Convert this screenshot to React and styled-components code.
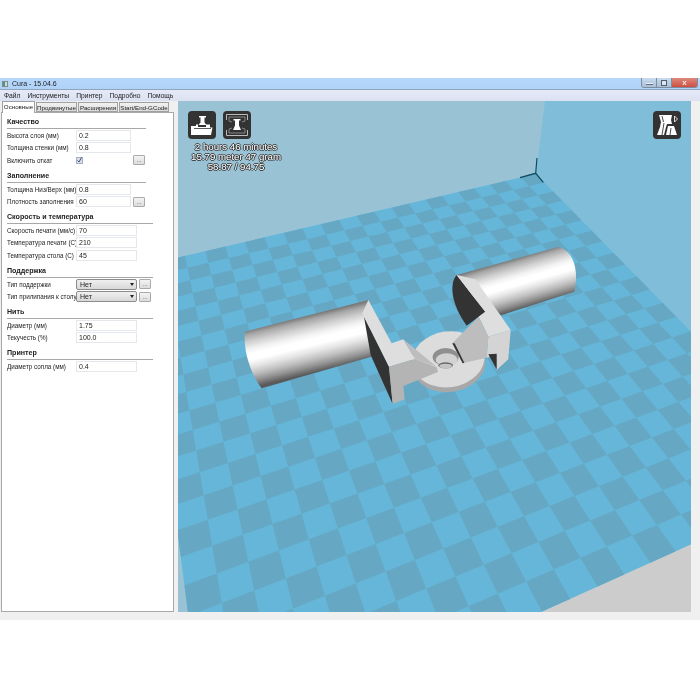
import React from "react";
import styled, { createGlobalStyle } from "styled-components";

const GlobalStyle = createGlobalStyle`
  html, body {
    margin: 0;
    padding: 0;
    background: #fff;
  }
  * {
    box-sizing: border-box;
  }
`;

// floor perspective: back corner, two vanishing points, step of one cell each way
const CORNER = [536, 174];
const VANISH_U = [2566, -300];
const VANISH_V = [70, -300];
const STEP_U = -0.00737;
const STEP_V = -0.0178;
const GRID = 22;

const project = (i, j) => {
  const a = STEP_U * i;
  const b = STEP_V * j;
  const w = 1 + a + b;
  return [
    (CORNER[0] + a * VANISH_U[0] + b * VANISH_V[0]) / w,
    (CORNER[1] + a * VANISH_U[1] + b * VANISH_V[1]) / w,
  ];
};

const toPoints = (pts) => pts.map((p) => p[0].toFixed(1) + "," + p[1].toFixed(1)).join(" ");

const plateLeft = project(GRID, 0);
const plateFront = project(GRID, GRID);
const plateRight = project(0, GRID);
const plate = toPoints([CORNER, plateLeft, plateFront, plateRight]);

const buildCheckers = () => {
  const cells = [];
  for (let i = 0; i < GRID; i++) {
    for (let j = 0; j < GRID; j++) {
      if ((i + j) % 2 !== 0) continue;
      cells.push(toPoints([project(i, j), project(i + 1, j), project(i + 1, j + 1), project(i, j + 1)]));
    }
  }
  return cells;
};

const checkers = buildCheckers();

const rodStops = [
  ["#7a7a7a", 0],
  ["#a8a8a8", 0.08],
  ["#cfcfcf", 0.2],
  ["#f2f2f2", 0.33],
  ["#ffffff", 0.42],
  ["#ffffff", 0.52],
  ["#e4e4e4", 0.64],
  ["#bdbdbd", 0.77],
  ["#929292", 0.88],
  ["#5a5a5a", 1],
];

const RodGradient = ({ id, x1, y1, x2, y2 }) => (
  <linearGradient id={id} gradientUnits="userSpaceOnUse" x1={x1} y1={y1} x2={x2} y2={y2}>
    {rodStops.map(([color, offset]) => (
      <stop key={offset} offset={offset} stopColor={color} />
    ))}
  </linearGradient>
);

const sections = [
  {
    title: "Качество",
    width: 55,
    lineWidth: 139,
    rows: [
      { label: "Высота слоя (мм)", value: "0.2" },
      { label: "Толщина стенки (мм)", value: "0.8" },
      { label: "Включить откат", check: true, more: true },
    ],
  },
  {
    title: "Заполнение",
    width: 55,
    lineWidth: 139,
    rows: [
      { label: "Толщина Низ/Верх (мм)", value: "0.8" },
      { label: "Плотность заполнения", value: "60", more: true },
    ],
  },
  {
    title: "Скорость и температура",
    width: 61,
    lineWidth: 146,
    rows: [
      { label: "Скорость печати (мм/с)", value: "70" },
      { label: "Температура печати (С)", value: "210" },
      { label: "Температура стола (С)", value: "45" },
    ],
  },
  {
    title: "Поддержка",
    width: 61,
    lineWidth: 146,
    rows: [
      { label: "Тип поддержки", select: "Нет", more: true },
      { label: "Тип прилипания к столу", select: "Нет", more: true },
    ],
  },
  {
    title: "Нить",
    width: 61,
    lineWidth: 146,
    rows: [
      { label: "Диаметр (мм)", value: "1.75" },
      { label: "Текучесть (%)", value: "100.0" },
    ],
  },
  {
    title: "Принтер",
    width: 61,
    lineWidth: 146,
    rows: [{ label: "Диаметр сопла (мм)", value: "0.4" }],
  },
];

const PrintIcon = () => (
  <svg width="28" height="28" viewBox="0 0 28 28">
    <rect width="28" height="28" rx="4" fill="#333" />
    <path d="M11 5h7v1.500h-1.500v5l2 2.500h-8l2-2.500v-5H11z" fill="#fff" />
    <path d="M3 15h5v-1.500h2V16h8v-2.500h4v3h2.500L23 24H3z" fill="#fff" />
    <path d="M6 17.500h17" stroke="#333" strokeWidth="0.8" />
  </svg>
);

const LayerIcon = () => (
  <svg width="28" height="28" viewBox="0 0 28 28">
    <rect width="28" height="28" rx="4" fill="#333" />
    <path d="M3.500 9V3.500h21V9M3.500 19v5.500h21V19" fill="none" stroke="#bbb" strokeWidth="1" />
    <path d="M6 10V6h16v4l-3 1M6 18v4h16v-4l-3-1M6 10l3 1M6 18l3-1" fill="none" stroke="#999" strokeWidth="0.8" />
    <path d="M10.500 8h7v1.500H16v5l2 4.500h-8l2-4.500v-5h-1.500z" fill="#fff" />
  </svg>
);

const ViewIcon = () => (
  <svg width="28" height="28" viewBox="0 0 28 28">
    <rect width="28" height="28" rx="4" fill="#333" />
    <path d="M6 4h13l-1 5 1 4h-5l-1 3-2 8H4l3-8 1-5z" fill="#fff" />
    <path d="M15 15h6l3 9h-11z" fill="#fff" />
    <path d="M18 17l-1 7M11 12l-2 12M9 5l1.500 6" stroke="#333" strokeWidth="0.9" fill="none" />
    <path d="M21.500 5l3 3-3 3z" fill="none" stroke="#eee" strokeWidth="0.9" />
  </svg>
);

const Scene = () => (
  <SceneSvg viewBox="178 101 513 511">
    <defs>
      <RodGradient id="leftRod" x1={200} y1={168} x2={240} y2={334} />
      <RodGradient id="rightRod" x1={800} y1={3} x2={842} y2={148} />
    </defs>

    <rect x="178" y="101" width="513" height="511" fill="#80bdd9" />
    <polygon points={toPoints([[178, 101], [545, 101], CORNER, plateLeft])} fill="#99c3d5" />
    <polygon points={toPoints([plateLeft, plateFront, [100, 800]])} fill="#99c3d5" />
    <polygon points={toPoints([plateFront, plateRight, [900, 800]])} fill="#cccccc" />
    <polygon points={plate} fill="#65b6d8" />
    {checkers.map((points) => (
      <polygon key={points} points={points} fill="#66a8c4" />
    ))}

    <path d="M537 158L535.700 173.300M520 177.700L535.700 173.300L543.300 182.300" stroke="#0c4a60" strokeWidth="1.200" fill="none" />

    {/* model, coordinates taken from a 3x crop */}
    <g transform="translate(240 260) scale(0.3333)">
      {/* centre disc */}
      <ellipse cx="627" cy="312" rx="110" ry="84" transform="rotate(-8 627 312)" fill="#a8a8a8" />
      <ellipse cx="625" cy="298" rx="109" ry="84" transform="rotate(-8 625 298)" fill="#dcdcdc" />
      <ellipse cx="617" cy="291" rx="39" ry="27" fill="#8f8f8f" />
      <ellipse cx="620" cy="299" rx="33" ry="19" fill="#d2d2d2" />
      <ellipse cx="617" cy="316" rx="22" ry="9" fill="#6a6a6a" />
      <ellipse cx="617" cy="318" rx="19" ry="7" fill="#c4c4c4" />

      {/* right rod and bracket */}
      <path d="M650 45C628 70 632 130 680 197L736 155Z" fill="#333" />
      <path d="M650 45L954 -39C1000 -30 1018 30 1003 95L785 165L736 155Z" fill="url(#rightRod)" />
      <polygon points="650,45 706,58 812,210 745,230 716,170 736,155" fill="#dedede" />
      <polygon points="745,230 812,210 805,298 770,330 770,283 740,293" fill="#d4d4d4" />
      <polygon points="745,283 770,281 770,328" fill="#333" />
      <polygon points="716,170 745,230 740,293 668,310 637,250" fill="#bdbdbd" />
      <polygon points="637,250 668,310 673,308 644,250" fill="#333" />

      {/* left rod and bracket */}
      <path d="M15 215L385 120L394 290L65 385C38 350 8 280 15 215Z" fill="url(#leftRod)" />
      <polygon points="372,170 447,320 458,432 392,285" fill="#333" />
      <polygon points="367,160 385,120 455,250 490,238 525,297 447,320" fill="#dedede" />
      <polygon points="447,320 525,297 590,322 594,336 490,378 494,418 458,432" fill="#b4b4b4" />
      <polygon points="490,238 590,320 525,297" fill="#bdbdbd" />
    </g>
  </SceneSvg>
);

const App = () => {
  return (
    <>
      <GlobalStyle />
      <Page>
        <Window>
          <TitleBar>
            <AppIcon />
            <TitleText>Cura - 15.04.6</TitleText>
            <WindowControls>
              <ControlButton>
                <MinGlyph />
              </ControlButton>
              <ControlButton>
                <MaxGlyph />
              </ControlButton>
              <CloseButton>x</CloseButton>
            </WindowControls>
          </TitleBar>
          <MenuBar>
            <MenuItem>Файл</MenuItem>
            <MenuItem>Инструменты</MenuItem>
            <MenuItem>Принтер</MenuItem>
            <MenuItem>Подробно</MenuItem>
            <MenuItem>Помощь</MenuItem>
          </MenuBar>
          <Body>
            <Sidebar>
              <Tabs>
                <Tab $active $width={33}>Основные</Tab>
                <Tab $width={41}>Продвинутые</Tab>
                <Tab $width={40}>Расширения</Tab>
                <Tab $width={50}>Start/End-GCode</Tab>
              </Tabs>
              <Pane>
                {sections.map((section) => (
                  <Section key={section.title}>
                    <SectionTitle $lineWidth={section.lineWidth}>{section.title}</SectionTitle>
                    {section.rows.map((row) => (
                      <Row key={row.label} $field={section.width}>
                        <Label>{row.label}</Label>
                        {row.value && <Field>{row.value}</Field>}
                        {row.check && (
                          <CheckCell>
                            <CheckBox>
                              <svg width="5" height="6" viewBox="0 0 5 6">
                                <path d="M0.500 3.500L2 5L4.500 0.500" stroke="#3d4f82" strokeWidth="1" fill="none" />
                              </svg>
                            </CheckBox>
                          </CheckCell>
                        )}
                        {row.select && (
                          <SelectBox>
                            {row.select}
                            <SelectArrow />
                          </SelectBox>
                        )}
                        {row.more && <MoreButton>...</MoreButton>}
                      </Row>
                    ))}
                  </Section>
                ))}
              </Pane>
            </Sidebar>
            <Viewport>
              <Scene />
              <IconGroup>
                <PrintIcon />
                <LayerIcon />
              </IconGroup>
              <Stats>
                <div>2 hours 46 minutes</div>
                <div>15.79 meter 47 gram</div>
                <div>58.87 / 94.75</div>
              </Stats>
              <ViewButton>
                <ViewIcon />
              </ViewButton>
            </Viewport>
          </Body>
        </Window>
      </Page>
    </>
  );
};

const Page = styled.div`
  width: 700px;
  height: 700px;
  padding-top: 78px;
  background: #fff;
  overflow: hidden;
  font-family: "Liberation Sans", Arial, sans-serif;
`;

const Window = styled.div`
  width: 700px;
  height: 542px;
  background: #f0f0f0;
  display: flex;
  flex-direction: column;
  filter: blur(0.25px);
`;

const TitleBar = styled.div`
  height: 12px;
  flex: none;
  display: flex;
  align-items: center;
  padding-left: 2px;
  background: linear-gradient(#b7d8fc, #b0d2f7);
  border-bottom: 1px solid #8ea6bd;
  position: relative;
`;

const AppIcon = styled.div`
  width: 6px;
  height: 6px;
  background: linear-gradient(90deg, #3f9d7d 50%, #d8d8d8 50%);
  border: 1px solid #888;
`;

const TitleText = styled.span`
  margin-left: 4px;
  font-size: 7px;
  color: #222;
`;

const WindowControls = styled.div`
  position: absolute;
  top: 0;
  right: 2px;
  height: 10px;
  display: flex;
  border: 1px solid #7c8da0;
  border-top: none;
  border-radius: 0 0 3px 3px;
  overflow: hidden;
`;

const ControlButton = styled.div`
  width: 15px;
  display: flex;
  align-items: center;
  justify-content: center;
  background: linear-gradient(#c9dcef, #a9bfd6);
  border-right: 1px solid #7c8da0;
`;

const MinGlyph = styled.div`
  width: 7px;
  height: 2px;
  margin-top: 3px;
  background: #eef;
  border: 1px solid #5d6c80;
  border-width: 0 0 1px;
`;

const MaxGlyph = styled.div`
  width: 6px;
  height: 6px;
  border: 1px solid #4f5d70;
  background: #dde6f0;
`;

const CloseButton = styled.div`
  width: 25px;
  text-align: center;
  font-size: 8px;
  line-height: 9px;
  font-weight: bold;
  color: #f6e6e4;
  background: linear-gradient(#dd8a7e, #cf4f42);
`;

const MenuBar = styled.div`
  height: 11px;
  flex: none;
  display: flex;
  align-items: center;
  padding-left: 4px;
  gap: 7px;
  background: linear-gradient(#e6eaf7, #dbe1f2);
`;

const MenuItem = styled.span`
  font-size: 6.7px;
  color: #222;
`;

const Body = styled.div`
  flex: 1;
  min-height: 0;
  display: flex;
  padding-bottom: 8px;
`;

const Sidebar = styled.div`
  width: 178px;
  flex: none;
  padding: 0 4px 0 1px;
  display: flex;
  flex-direction: column;
`;

const Tabs = styled.div`
  height: 11px;
  flex: none;
  display: flex;
  gap: 1px;
  padding-left: 1px;
  position: relative;
  z-index: 1;
`;

const Tab = styled.div`
  width: ${(p) => p.$width}px;
  height: ${(p) => (p.$active ? 12 : 10)}px;
  margin-top: ${(p) => (p.$active ? 0 : 1)}px;
  font-size: 6.2px;
  line-height: 9px;
  text-align: center;
  white-space: nowrap;
  color: #222;
  background: ${(p) => (p.$active ? "#fff" : "linear-gradient(#f2f2f2, #dcdcdc)")};
  border: 1px solid #a0a0a0;
  border-bottom: ${(p) => (p.$active ? "none" : "1px solid #a0a0a0")};
`;

const Pane = styled.div`
  flex: 1;
  background: #fff;
  border: 1px solid #a8a8a8;
  padding: 5px 0 0 5px;
`;

const Section = styled.section`
  margin-bottom: 5px;
`;

const SectionTitle = styled.div`
  width: ${(p) => p.$lineWidth}px;
  height: 11px;
  font-size: 7.1px;
  line-height: 9px;
  font-weight: bold;
  color: #222;
  border-bottom: 1px solid #a8a8a8;
`;

const Row = styled.div`
  height: 12.6px;
  display: grid;
  grid-template-columns: 67px ${(p) => p.$field}px 14px;
  column-gap: 2px;
  align-items: center;
`;

const Label = styled.span`
  font-size: 6.3px;
  white-space: nowrap;
  color: #222;
`;

const Field = styled.div`
  height: 11px;
  padding-left: 2px;
  font-size: 7px;
  line-height: 10px;
  color: #222;
  background: #fff;
  border: 1px solid #e4e7ec;
`;

const CheckCell = styled.div`
  display: flex;
  align-items: center;
`;

const CheckBox = styled.div`
  width: 7px;
  height: 7px;
  display: flex;
  align-items: center;
  justify-content: center;
  background: #d9dfe8;
  border: 1px solid #a9b0bb;
`;

const SelectBox = styled.div`
  height: 11px;
  padding-left: 3px;
  font-size: 7px;
  line-height: 9px;
  color: #222;
  background: linear-gradient(#f0f0f0, #d8d8d8);
  border: 1px solid #8c8c8c;
  border-radius: 2px;
  position: relative;
`;

const SelectArrow = styled.div`
  position: absolute;
  right: 2px;
  top: 3px;
  border-left: 2.5px solid transparent;
  border-right: 2.5px solid transparent;
  border-top: 3px solid #222;
`;

const MoreButton = styled.div`
  width: 12px;
  height: 10px;
  font-size: 6px;
  line-height: 8px;
  text-align: center;
  color: #444;
  background: linear-gradient(#f4f4f4, #dcdcdc);
  border: 1px solid #aaa;
  border-radius: 1px;
`;

const Viewport = styled.div`
  width: 513px;
  flex: none;
  position: relative;
  overflow: hidden;
`;

const SceneSvg = styled.svg`
  display: block;
  width: 513px;
  height: 511px;
`;

const IconGroup = styled.div`
  position: absolute;
  left: 10px;
  top: 10px;
  display: flex;
  gap: 7px;
`;

const Stats = styled.div`
  position: absolute;
  left: 8px;
  top: 41px;
  width: 100px;
  text-align: center;
  font-size: 9.7px;
  line-height: 10px;
  white-space: nowrap;
  color: #fff;
  text-shadow: 1px 0 0 #333, -1px 0 0 #333, 0 1px 0 #333, 0 -1px 0 #333;
`;

const ViewButton = styled.div`
  position: absolute;
  right: 10px;
  top: 10px;
`;

export default App;
